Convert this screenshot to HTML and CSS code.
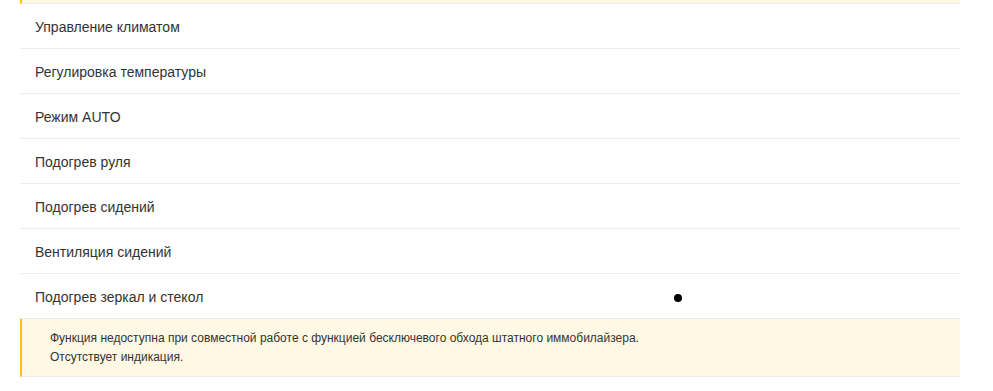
FILE: index.html
```html
<!DOCTYPE html>
<html lang="ru">
<head>
    <meta charset="UTF-8">
    <meta name="viewport" content="width=device-width, initial-scale=1.0">
    <title>Функции</title>
    <link rel="stylesheet" href="styles.css">
</head>
<body>
    <div class="features">
        <div class="notice notice-tail"></div>

        <div class="feature">Управление климатом</div>
        <div class="feature">Регулировка температуры</div>
        <div class="feature">Режим AUTO</div>
        <div class="feature">Подогрев руля</div>
        <div class="feature">Подогрев сидений</div>
        <div class="feature">Вентиляция сидений</div>
        <div class="feature feature-marked">
            <span>Подогрев зеркал и стекол</span>
            <span class="dot"></span>
        </div>

        <div class="notice">
            <p>Функция недоступна при совместной работе с функцией бесключевого обхода штатного иммобилайзера.</p>
            <p>Отсутствует индикация.</p>
        </div>
    </div>
</body>
</html>
```

FILE: styles.css
```css
body {
    margin: 0;
    padding: 0;
    background-color: #fff;
    font-family: 'Liberation Sans', Arial, sans-serif;
    color: #333;
}

.features {
    width: 940px;
    margin-left: 20px;
}

.feature {
    height: 42px;
    padding: 2px 15px 0;
    display: flex;
    align-items: center;
    font-size: 14px;
    border-bottom: 1px solid #ececec;
}

.feature-marked {
    display: grid;
    grid-template-columns: 639px auto;
    align-items: center;
}

.dot {
    width: 8px;
    height: 8px;
    margin-top: 2px;
    border-radius: 50%;
    background-color: #000;
}

/* Bloc d'avertissement jaune */
.notice {
    background-color: #fff8e4;
    border-left: 2px solid #ffc107;
    border-bottom: 1px solid #ececec;
    padding: 10px 28px 9px;
    font-size: 12px;
    line-height: 19px;
}

.notice p {
    margin: 0;
}

.notice-tail {
    height: 3px;
    padding: 0;
}
```
